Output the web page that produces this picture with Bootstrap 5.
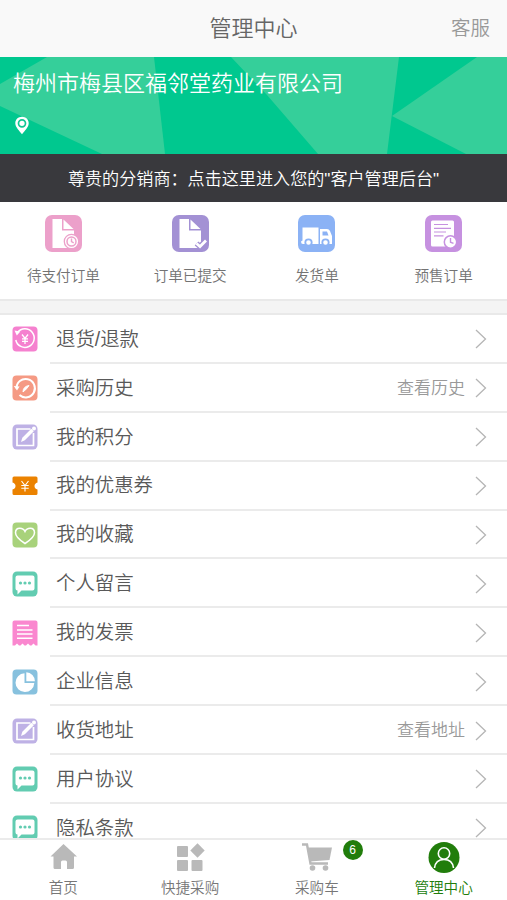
<!DOCTYPE html>
<html lang="zh-CN">
<head>
<meta charset="utf-8">
<meta name="viewport" content="width=device-width, initial-scale=1">
<title>管理中心</title>
<link href="https://cdn.jsdelivr.net/npm/bootstrap@5.3.0/dist/css/bootstrap.min.css" rel="stylesheet">
<style>
body{font-family:"Liberation Sans","Noto Sans CJK SC",sans-serif;font-weight:350;color:#5a5a5a;background:#fff;height:900px;line-height:1}
svg{display:block;flex:none}
.topbar{height:57px;background:#f9f9f9;font-size:22px;color:#666}
.topbar .service{right:17px;font-size:19.5px;color:#999}
.hero{height:96.5px;background:#00c88f;color:#fff}
.hero-shapes{inset:0}
.company{font-size:22px;line-height:30px;padding:12px 13px 0}
.pin{margin:17px 0 0 15px}
.notice{height:48.5px;padding-top:3px;background:#39393d;color:#fff;font-size:17.1px}
.orders{height:99px;border-bottom:2px solid #e9e9e9}
.orders a{padding-top:12.5px;font-size:14.6px;color:#737373}
.orders svg{margin-bottom:17.5px}
.spacer{height:14px;background:#f4f4f4;border-bottom:2px solid #e9e9e9}
.menu a{height:48.9px;padding-left:12px;color:#595959;font-size:19.4px}
.menu .line{margin-left:12px;padding:2px 20px 0 6px;border-bottom:2px solid #ebebeb}
.menu .hint{font-size:17px;color:#999;margin-right:10px}
.tabs{height:62px;background:#fff;border-top:2px solid #ebebeb;font-size:14.6px}
.tabs a{color:#777;padding-top:2px}
.tabs svg{margin-bottom:7px}
.tabs a.current{color:#217d0b}
.count{left:89px;top:0;width:20px;height:20px;background:#217d0b;color:#fff;font-size:12px;font-weight:400}
</style>
<script src="https://cdn.jsdelivr.net/npm/bootstrap@5.3.0/dist/js/bootstrap.bundle.min.js"></script>
</head>
<body class="d-flex flex-column overflow-hidden">
<svg width="0" height="0" class="position-absolute">
<defs>
<symbol id="arrow" viewBox="0 0 12 20"><path d="M1 1l9.500 9L1 19" fill="none" stroke="#b5b5b5" stroke-width="1.300"/></symbol>
<symbol id="edit" viewBox="0 0 26 26"><rect x=".5" y=".5" width="25" height="25" rx="4.500" fill="#beb1e5"/><path d="M18.500 5H5v16.500h16.500V9" fill="none" stroke="#fff" stroke-width="1.700"/><path d="M9 18l1.300-4.300L19.300 4.700l2.500 2.500-9 9z" fill="#fff"/><circle cx="22" cy="4.500" r="2" fill="#fff"/></symbol>
<symbol id="chat" viewBox="0 0 26 26"><rect x=".5" y=".5" width="25" height="25" rx="4.500" fill="#62ccb1"/><path d="M5.500 4.500h15q2 0 2 2v11q0 2-2 2H9.500L5.500 23.500V19.500q-2 0-2-2v-11q0-2 2-2z" fill="#fff"/><g fill="#62ccb1"><circle cx="8.500" cy="12" r="1.600"/><circle cx="13" cy="12" r="1.600"/><circle cx="17.500" cy="12" r="1.600"/></g></symbol>
</defs>
</svg>

<header class="topbar position-relative d-flex align-items-center justify-content-center flex-shrink-0">
<span>管理中心</span><span class="service position-absolute">客服</span>
</header>

<section class="hero position-relative overflow-hidden flex-shrink-0">
<svg class="hero-shapes position-absolute" width="507" height="97" viewBox="0 0 507 97"><g fill="#35cf9a"><path d="M47 0H154L165 97H102L0 49V27z"/><path d="M231 0H399L387 97H318L267 38z"/><path d="M477 0H507V97H466L392 59z"/></g></svg>
<div class="company position-relative">梅州市梅县区福邻堂药业有限公司</div>
<svg class="pin position-relative" width="14" height="19" viewBox="0 0 14 19"><path d="M7 .8C3.200.8.300 3.600.300 7.200c0 3.900 4.200 7.700 6.700 11 2.500-3.300 6.700-7.100 6.700-11C13.700 3.600 10.800.8 7 .8z" fill="#fff"/><circle cx="7" cy="7.300" r="3.500" fill="#fff" stroke="#11c793" stroke-width="1.700"/></svg>
</section>

<a href="#" class="notice d-flex align-items-center justify-content-center text-decoration-none flex-shrink-0">尊贵的分销商：点击这里进入您的"客户管理后台"</a>

<nav class="orders row g-0 flex-shrink-0">
<a href="#" class="col-3 d-flex flex-column align-items-center text-decoration-none">
<svg width="37" height="37" viewBox="0 0 37 37"><rect width="37" height="37" rx="7" fill="#eca0ca"/><path d="M7.500 4H17v11.500h12V33H7.500z" fill="#fff"/><path d="M18.500 4.500V14H28.500z" fill="#fff"/><circle cx="26.500" cy="26.500" r="7.200" fill="#fff" stroke="#eca0ca" stroke-width="1.300"/><circle cx="26.500" cy="26.500" r="4.500" fill="none" stroke="#eca0ca" stroke-width="1.500"/><path d="M26.500 23.500v3.200l2.200 1.200" fill="none" stroke="#eca0ca" stroke-width="1.400"/></svg>待支付订单</a>
<a href="#" class="col-3 d-flex flex-column align-items-center text-decoration-none">
<svg width="37" height="37" viewBox="0 0 37 37"><rect width="37" height="37" rx="7" fill="#a391d4"/><path d="M7.500 4H17v11.500h12V33H7.500z" fill="#fff"/><path d="M18.500 4.500V14H28.500z" fill="#fff"/><path d="M24.500 28.500l3.500 3 6-6" fill="none" stroke="#a391d4" stroke-width="5.500"/><path d="M24.500 28.500l3.500 3 6-6" fill="none" stroke="#fff" stroke-width="2.800"/></svg>订单已提交</a>
<a href="#" class="col-3 d-flex flex-column align-items-center text-decoration-none">
<svg width="37" height="37" viewBox="0 0 37 37"><rect width="37" height="37" rx="7" fill="#8bb2f5"/><path d="M4.500 12.500h16V29H5q-2 0-2-2.500l1.500-1zM22 14h7q2 0 3 2l2 5v8H22z" fill="#fff"/><path d="M24.500 16.500H29l1.500 4h-6z" fill="#8bb2f5"/><g fill="#fff" stroke="#8bb2f5" stroke-width="1.800"><circle cx="10.500" cy="27.500" r="3.200"/><circle cx="27.500" cy="27.500" r="3.200"/></g></svg>发货单</a>
<a href="#" class="col-3 d-flex flex-column align-items-center text-decoration-none">
<svg width="37" height="37" viewBox="0 0 37 37"><rect width="37" height="37" rx="7" fill="#c691e0"/><rect x="6" y="5.500" width="23" height="26" rx="1.500" fill="#fff"/><path d="M9 9.500h14M9 13.300h17M9 17h12M9 20.800h9.500" stroke="#c691e0" stroke-width="1.200"/><circle cx="25.500" cy="27" r="6.200" fill="#fff" stroke="#c691e0" stroke-width="1.500"/><path d="M25.500 23v4.200l3 1.200" fill="none" stroke="#c691e0" stroke-width="1.400"/></svg>预售订单</a>
</nav>
<div class="spacer flex-shrink-0"></div>

<main class="menu flex-grow-1 overflow-hidden">
<a href="#" class="d-flex align-items-center text-decoration-none"><svg width="26" height="26" viewBox="0 0 26 26"><rect x=".5" y=".5" width="25" height="25" rx="4" fill="#f581cf"/><path d="M5.500 6.500A9.300 9.300 0 1 1 3.800 14" fill="none" stroke="#fff" stroke-width="1.500"/><path d="M2.500 4.500l5.800 1-3.500 4z" fill="#fff"/><path d="M10 8.500l3 4 3-4M13 12.500V18M10 12.800h6M10 15.300h6" fill="none" stroke="#fff" stroke-width="1.300"/></svg><span class="line d-flex align-items-center flex-grow-1 h-100"><span class="me-auto">退货/退款</span><svg width="12" height="20"><use href="#arrow"/></svg></span></a>
<a href="#" class="d-flex align-items-center text-decoration-none"><svg width="26" height="26" viewBox="0 0 26 26"><rect x=".5" y=".5" width="25" height="25" rx="4" fill="#f59a84"/><path d="M4.500 13.500A9.200 9.200 0 1 1 7.500 20" fill="none" stroke="#fff" stroke-width="2"/><path d="M1.800 11l5.800.5-2.600 4z" fill="#fff"/><path d="M11 17q0-5.500 6-6.500-1.500 3-6 6.500" fill="#fff" stroke="#fff" stroke-width="1"/></svg><span class="line d-flex align-items-center flex-grow-1 h-100"><span class="me-auto">采购历史</span><span class="hint">查看历史</span><svg width="12" height="20"><use href="#arrow"/></svg></span></a>
<a href="#" class="d-flex align-items-center text-decoration-none"><svg width="26" height="26"><use href="#edit"/></svg><span class="line d-flex align-items-center flex-grow-1 h-100"><span class="me-auto">我的积分</span><svg width="12" height="20"><use href="#arrow"/></svg></span></a>
<a href="#" class="d-flex align-items-center text-decoration-none"><svg width="26" height="26" viewBox="0 0 26 26"><path d="M2 3.500H24q1.500 0 1.500 1.500v4.500q-3 1-3 3.500t3 3.500V20.500q0 1.500-1.500 1.500H2Q.5 22 .5 20.500V16.500q3-1 3-3.500t-3-3.500V5Q.5 3.500 2 3.500z" fill="#eb8200"/><path d="M9.500 8l3.500 4.500L16.500 8M13 12.500v6M9.300 12.500h7.400M9.300 15.300h7.400" fill="none" stroke="#fff" stroke-width="1.100"/></svg><span class="line d-flex align-items-center flex-grow-1 h-100"><span class="me-auto">我的优惠券</span><svg width="12" height="20"><use href="#arrow"/></svg></span></a>
<a href="#" class="d-flex align-items-center text-decoration-none"><svg width="26" height="26" viewBox="0 0 26 26"><rect x=".5" y=".5" width="25" height="25" rx="4" fill="#a8d27b"/><path d="M13 21.500Q3.500 15.500 3.500 10.800 3.500 6.200 7.800 6.200 11.500 6.200 13 9.500 14.500 6.200 18.200 6.200 22.500 6.200 22.500 10.800 22.500 15.500 13 21.500z" fill="none" stroke="#fff" stroke-width="1.500"/></svg><span class="line d-flex align-items-center flex-grow-1 h-100"><span class="me-auto">我的收藏</span><svg width="12" height="20"><use href="#arrow"/></svg></span></a>
<a href="#" class="d-flex align-items-center text-decoration-none"><svg width="26" height="26"><use href="#chat"/></svg><span class="line d-flex align-items-center flex-grow-1 h-100"><span class="me-auto">个人留言</span><svg width="12" height="20"><use href="#arrow"/></svg></span></a>
<a href="#" class="d-flex align-items-center text-decoration-none"><svg width="26" height="26" viewBox="0 0 26 26"><path d="M2.500.5h21q2 0 2 2v23h-2l-2-2-2 2h-1.500l-2-2-2 2h-1.500l-2-2-2 2H7l-2-2-2 2H.5v-23q0-2 2-2z" fill="#fa87cf"/><path d="M5 5.500h12M5 10h15.500M5 14h15.500M5 18.300h15.500" stroke="#fff" stroke-width="1.500"/></svg><span class="line d-flex align-items-center flex-grow-1 h-100"><span class="me-auto">我的发票</span><svg width="12" height="20"><use href="#arrow"/></svg></span></a>
<a href="#" class="d-flex align-items-center text-decoration-none"><svg width="26" height="26" viewBox="0 0 26 26"><rect x=".5" y=".5" width="25" height="25" rx="4" fill="#87c1de"/><path d="M12.500 4.200V14h9.800A9.400 9.400 0 1 1 12.500 4.200z" fill="#fff"/><path d="M14.300 3.200a9 9 0 0 1 8.600 9h-8.600z" fill="#fff"/></svg><span class="line d-flex align-items-center flex-grow-1 h-100"><span class="me-auto">企业信息</span><svg width="12" height="20"><use href="#arrow"/></svg></span></a>
<a href="#" class="d-flex align-items-center text-decoration-none"><svg width="26" height="26"><use href="#edit"/></svg><span class="line d-flex align-items-center flex-grow-1 h-100"><span class="me-auto">收货地址</span><span class="hint">查看地址</span><svg width="12" height="20"><use href="#arrow"/></svg></span></a>
<a href="#" class="d-flex align-items-center text-decoration-none"><svg width="26" height="26"><use href="#chat"/></svg><span class="line d-flex align-items-center flex-grow-1 h-100"><span class="me-auto">用户协议</span><svg width="12" height="20"><use href="#arrow"/></svg></span></a>
<a href="#" class="d-flex align-items-center text-decoration-none"><svg width="26" height="26"><use href="#chat"/></svg><span class="line d-flex align-items-center flex-grow-1 h-100"><span class="me-auto">隐私条款</span><svg width="12" height="20"><use href="#arrow"/></svg></span></a>
</main>

<footer class="tabs row g-0 fixed-bottom">
<a href="#" class="col-3 d-flex flex-column align-items-center text-decoration-none"><svg width="32" height="32" viewBox="0 0 32 32"><path d="M16.500 2L30 14.500H27V25.500q0 1.500-1.500 1.500H20V20q0-1.500-1.500-1.500h-3q-1.500 0-1.500 1.500V27H8Q6.500 27 6.500 25.500V14.500H3.500z" fill="#b9b9b9"/></svg>首页</a>
<a href="#" class="col-3 d-flex flex-column align-items-center text-decoration-none"><svg width="32" height="32" viewBox="0 0 32 32"><g fill="#b9b9b9"><rect x="3" y="4" width="11" height="11" rx="1"/><rect x="3" y="18" width="11" height="11" rx="1"/><rect x="17.500" y="18" width="11" height="11" rx="1"/><path d="M23.500 1.300l7.200 7.200-7.200 7.200-7.200-7.200z"/></g></svg>快捷采购</a>
<a href="#" class="col-3 d-flex flex-column align-items-center text-decoration-none position-relative"><svg width="32" height="32" viewBox="0 0 32 32"><path d="M1 2.500H6l3.500 19H27" fill="none" stroke="#b9b9b9" stroke-width="2.400"/><path d="M6.500 5.500H31L28.500 18 9 19.500z" fill="#b9b9b9"/><circle cx="11.500" cy="26" r="2.800" fill="#b9b9b9"/><circle cx="24.500" cy="26" r="2.800" fill="#b9b9b9"/></svg>采购车<span class="count position-absolute rounded-circle d-flex align-items-center justify-content-center">6</span></a>
<a href="#" class="current col-3 d-flex flex-column align-items-center text-decoration-none"><svg width="32" height="32" viewBox="0 0 32 32"><circle cx="16" cy="15.500" r="15.500" fill="#217d0b"/><g fill="none" stroke="#fff" stroke-width="1.600"><circle cx="16" cy="11.500" r="5.700"/><path d="M6.500 26q1-8.500 9.500-8.500T25.500 26"/></g></svg>管理中心</a>
</footer>
</body>
</html>
